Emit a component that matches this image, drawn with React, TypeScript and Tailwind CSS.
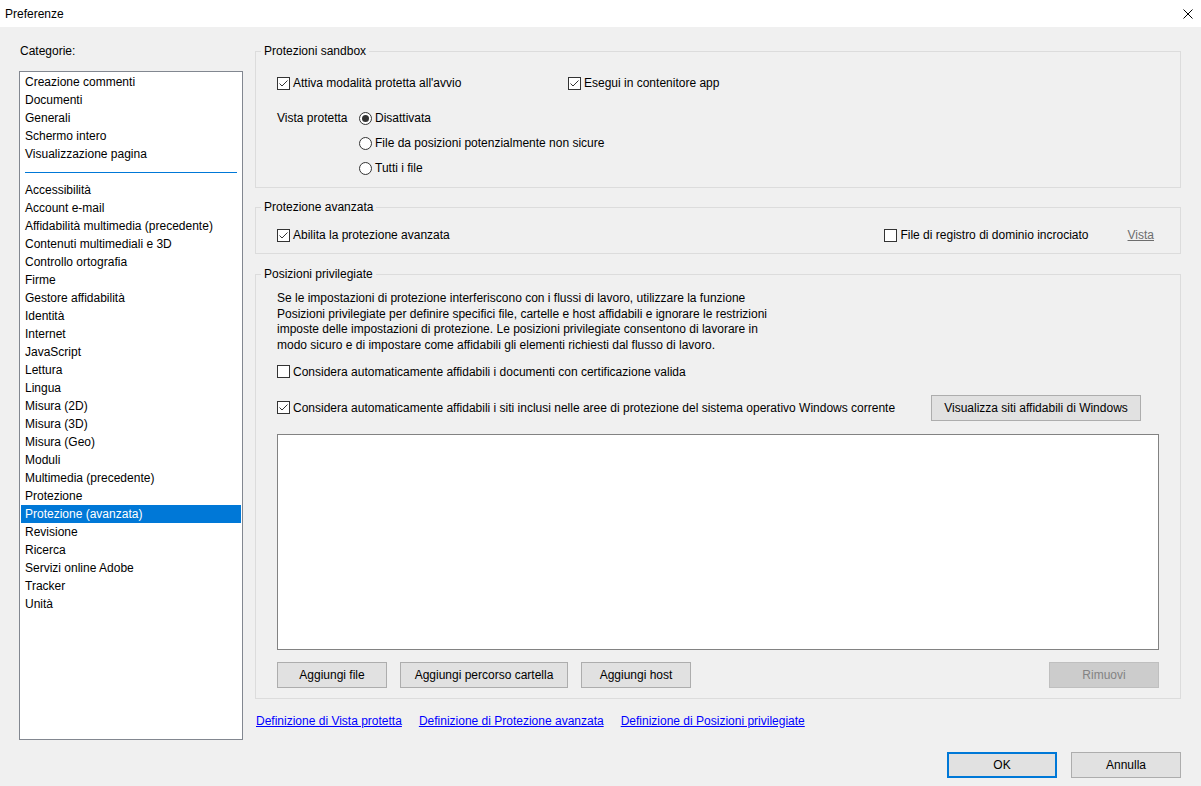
import React from 'react';

const categoriesTop = [
  'Creazione commenti',
  'Documenti',
  'Generali',
  'Schermo intero',
  'Visualizzazione pagina',
];

const categories = [
  'Accessibilità',
  'Account e-mail',
  'Affidabilità multimedia (precedente)',
  'Contenuti multimediali e 3D',
  'Controllo ortografia',
  'Firme',
  'Gestore affidabilità',
  'Identità',
  'Internet',
  'JavaScript',
  'Lettura',
  'Lingua',
  'Misura (2D)',
  'Misura (3D)',
  'Misura (Geo)',
  'Moduli',
  'Multimedia (precedente)',
  'Protezione',
  'Protezione (avanzata)',
  'Revisione',
  'Ricerca',
  'Servizi online Adobe',
  'Tracker',
  'Unità',
];

const Checkbox = ({ checked, label }: { checked?: boolean; label: string }) => (
  <label className="flex items-center h-4 whitespace-nowrap">
    <svg width="13" height="13" viewBox="0 0 13 13" className="shrink-0">
      <rect x="0.5" y="0.5" width="12" height="12" fill="#fff" stroke="#333" />
      {checked && (
        <polyline points="2.5,6.5 5,9 10.5,3.5" fill="none" stroke="#333" strokeWidth="1" />
      )}
    </svg>
    <span className="ml-[3px]">{label}</span>
  </label>
);

const Radio = ({ checked, label }: { checked?: boolean; label: string }) => (
  <label className="flex items-center h-4 whitespace-nowrap">
    <svg width="13" height="13" viewBox="0 0 13 13" className="shrink-0">
      <circle cx="6.5" cy="6.5" r="6" fill="#fff" stroke="#333" />
      {checked && <circle cx="6.5" cy="6.5" r="3.5" fill="#333" />}
    </svg>
    <span className="ml-[3px]">{label}</span>
  </label>
);

const Button = ({
  children,
  width,
  disabled,
  primary,
}: {
  children: React.ReactNode;
  width: string;
  disabled?: boolean;
  primary?: boolean;
}) => (
  <button
    className={`${width} h-[26px] flex items-center justify-center ${
      disabled
        ? 'bg-[#cccccc] border border-[#bfbfbf] text-[#838383]'
        : primary
        ? 'bg-[#e1e1e1] border-2 border-[#0078d7] text-black'
        : 'bg-[#e1e1e1] border border-[#adadad] text-black'
    }`}
  >
    {children}
  </button>
);

const Group = ({ title, children }: { title: string; children: React.ReactNode }) => (
  <fieldset className="border border-[#dcdcdc] p-0 m-0">
    <legend className="ml-[5px] px-[3px] leading-4">{title}</legend>
    {children}
  </fieldset>
);

export default function App() {
  return (
    <div className="w-[1201px] h-[786px] bg-[#f0f0f0] text-black text-[12px] font-['Liberation_Sans',Arial,sans-serif] overflow-hidden flex flex-col">
      {/* Title bar */}
      <div className="h-[27px] bg-white flex items-center justify-between pl-[5px] pr-[8px]">
        <span className="leading-4">Preferenze</span>
        <svg width="10" height="10" viewBox="0 0 10 10">
          <path d="M0.5 0.5 L9.5 9.5 M9.5 0.5 L0.5 9.5" stroke="#000" strokeWidth="1" />
        </svg>
      </div>

      {/* Main */}
      <div className="flex pt-4 pl-[19px] pr-[20px] gap-[12px]">
        {/* Categories */}
        <div className="w-[224px] flex flex-col">
          <div className="leading-4 pl-[1px]">Categorie:</div>
          <div className="mt-[12px] h-[669px] bg-white border border-[#828790] pt-[1px] px-[1px]">
            {categoriesTop.map((c) => (
              <div key={c} className="h-[18px] leading-[18px] pl-[4px]">
                {c}
              </div>
            ))}
            <div className="h-[18px] flex items-center px-[4px]">
              <div className="h-px w-full bg-[#0078d7]" />
            </div>
            {categories.map((c) => (
              <div
                key={c}
                className={`h-[18px] leading-[18px] pl-[4px] ${
                  c === 'Protezione (avanzata)' ? 'bg-[#0078d7] text-white' : ''
                }`}
              >
                {c}
              </div>
            ))}
          </div>
        </div>

        {/* Right panel */}
        <div className="flex-1 flex flex-col">
          <Group title="Protezioni sandbox">
            <div className="pl-[21px] pt-4 pb-[11px]">
              <div className="flex">
                <div className="w-[291px]">
                  <Checkbox checked label="Attiva modalità protetta all'avvio" />
                </div>
                <Checkbox checked label="Esegui in contenitore app" />
              </div>
              <div className="flex mt-[19px]">
                <div className="w-[82px] leading-4">Vista protetta</div>
                <div className="flex flex-col gap-[9px]">
                  <Radio checked label="Disattivata" />
                  <Radio label="File da posizioni potenzialmente non sicure" />
                  <Radio label="Tutti i file" />
                </div>
              </div>
            </div>
          </Group>

          <div className="mt-[11px]">
            <Group title="Protezione avanzata">
              <div className="flex items-center pl-[21px] pr-[26px] pt-[12px] pb-[10px]">
                <Checkbox checked label="Abilita la protezione avanzata" />
                <div className="ml-auto">
                  <Checkbox label="File di registro di dominio incrociato" />
                </div>
                <span className="ml-[39px] leading-4 underline text-[#6d6d6d]">Vista</span>
              </div>
            </Group>
          </div>

          <div className="mt-[12px]">
            <Group title="Posizioni privilegiate">
              <div className="pl-[21px] pr-[21px] pt-[9px] pb-[10px] flex flex-col">
                <p className="leading-[15.67px]">
                  Se le impostazioni di protezione interferiscono con i flussi di lavoro, utilizzare la funzione
                  <br />
                  Posizioni privilegiate per definire specifici file, cartelle e host affidabili e ignorare le restrizioni
                  <br />
                  imposte delle impostazioni di protezione. Le posizioni privilegiate consentono di lavorare in
                  <br />
                  modo sicuro e di impostare come affidabili gli elementi richiesti dal flusso di lavoro.
                </p>
                <div className="mt-[10px]">
                  <Checkbox label="Considera automaticamente affidabili i documenti con certificazione valida" />
                </div>
                <div className="mt-[15px] flex items-center">
                  <Checkbox
                    checked
                    label="Considera automaticamente affidabili i siti inclusi nelle aree di protezione del sistema operativo Windows corrente"
                  />
                  <div className="ml-auto mr-[18px]">
                    <Button width="w-[210px]">Visualizza siti affidabili di Windows</Button>
                  </div>
                </div>
                <div className="mt-[13px] h-[216px] bg-white border border-[#828282]" />
                <div className="mt-[12px] flex gap-[13px]">
                  <Button width="w-[110px]">Aggiungi file</Button>
                  <Button width="w-[168px]">Aggiungi percorso cartella</Button>
                  <Button width="w-[110px]">Aggiungi host</Button>
                  <div className="ml-auto">
                    <Button width="w-[110px]" disabled>
                      Rimuovi
                    </Button>
                  </div>
                </div>
              </div>
            </Group>
          </div>

          <div className="mt-[14px] pl-[1px] flex gap-[17px] leading-4 text-[#0000ff] underline">
            <span>Definizione di Vista protetta</span>
            <span>Definizione di Protezione avanzata</span>
            <span>Definizione di Posizioni privilegiate</span>
          </div>
        </div>
      </div>

      {/* Footer */}
      <div className="mt-[12px] flex justify-end gap-[14px] pr-[20px]">
        <Button width="w-[110px]" primary>
          OK
        </Button>
        <Button width="w-[110px]">Annulla</Button>
      </div>
    </div>
  );
}
